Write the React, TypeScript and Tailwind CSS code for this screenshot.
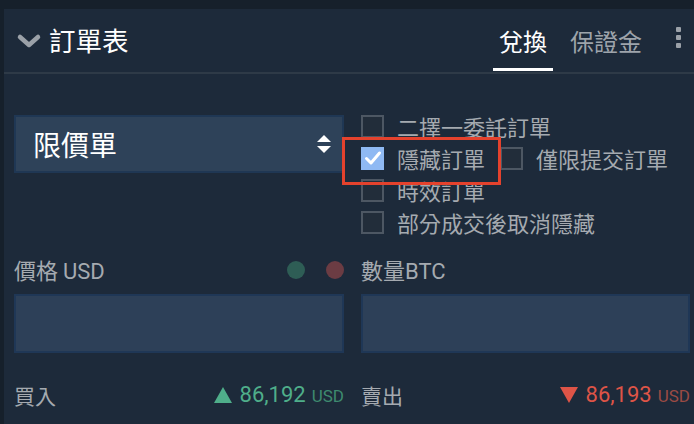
import React from "react";

const cjk = { fontFamily: '"Noto Sans CJK TC", "Noto Sans", sans-serif' };
const num = { fontFamily: 'Roboto, "Noto Sans CJK TC", sans-serif' };

function Box({ checked }: { checked?: boolean }) {
  if (checked) {
    return (
      <div className="w-[23px] h-[23px] bg-[#8fb9f3] flex items-center justify-center shrink-0">
        <svg width="18" height="16" viewBox="0 0 18 16">
          <path d="M2.5 8.5 L7 13 L15.5 3" fill="none" stroke="#ffffff" strokeWidth="3" strokeLinecap="round" strokeLinejoin="round" />
        </svg>
      </div>
    );
  }
  return <div className="w-[23px] h-[23px] border-2 border-[#4d5763] bg-[#222d3a] shrink-0" />;
}

export default function App() {
  return (
    <div className="w-[694px] h-[424px] bg-[#16202b] overflow-hidden pt-[9px] pl-[4px]" style={cjk}>
      <div className="relative h-full bg-[#1d2a3a]">
        {/* header */}
        <div className="h-[65px] flex items-center border-b-2 border-[#2e3a47] relative">
          <svg className="ml-[12px]" width="26" height="18" viewBox="0 0 26 18">
            <path d="M4 5 L13 13 L22 5" fill="none" stroke="#9ba1a8" strokeWidth="4.5" strokeLinecap="round" strokeLinejoin="round" />
          </svg>
          <span className="ml-[7px] text-[26.5px] text-white leading-none">訂單表</span>
          <div className="ml-auto flex items-center h-full">
            <div className="relative h-full flex items-center px-[6px]">
              <span className="text-[24px] text-white leading-none">兌換</span>
              <div className="absolute left-0 right-0 bottom-[1px] h-[3px] bg-white" />
            </div>
            <span className="ml-[17px] text-[24px] text-[#9ea4ab] leading-none">保證金</span>
            <div className="ml-[34px] mr-[13px] flex flex-col gap-[3px] self-start mt-[18px]">
              <div className="w-[5px] h-[5px] rounded-[1px] bg-[#9ba1a8]" />
              <div className="w-[5px] h-[5px] rounded-[1px] bg-[#9ba1a8]" />
              <div className="w-[5px] h-[5px] rounded-[1px] bg-[#9ba1a8]" />
            </div>
          </div>
        </div>

        {/* body */}
        <div className="pl-[10px] pt-[36px]">
          <div className="flex gap-[17px]">
            <div className="w-[330px] pt-[5px]">
              <div className="h-[58px] bg-[#2e4259] border-2 border-[#1f3754] flex items-center pl-[17px] pr-[10px]">
                <span className="text-[28px] text-white leading-none">限價單</span>
                <svg className="ml-auto" width="16" height="20" viewBox="0 0 16 20">
                  <path d="M8 1 L15 8 L1 8 Z" fill="#ffffff" />
                  <path d="M1 12 L15 12 L8 19 Z" fill="#ffffff" />
                </svg>
              </div>
            </div>
            <div className="flex-1 flex flex-col">
              <div className="h-[32px] flex items-center">
                <Box />
                <span className="ml-[13px] text-[22px] text-[#a5aab0] leading-none">二擇一委託訂單</span>
              </div>
              <div className="h-[32px] flex items-center">
                <Box checked />
                <span className="ml-[13px] text-[22px] text-[#a5aab0] leading-none">隱藏訂單</span>
                <div className="ml-[15px]"><Box /></div>
                <span className="ml-[13px] text-[22px] text-[#a5aab0] leading-none">僅限提交訂單</span>
              </div>
              <div className="h-[32px] flex items-center">
                <Box />
                <span className="ml-[13px] text-[22px] text-[#a5aab0] leading-none">時效訂單</span>
              </div>
              <div className="h-[32px] flex items-center">
                <Box />
                <span className="ml-[13px] text-[22px] text-[#a5aab0] leading-none">部分成交後取消隱藏</span>
              </div>
            </div>
          </div>

          <div className="flex gap-[17px] mt-[18px]">
            <div className="w-[330px]">
              <div className="h-[28px] flex items-center">
                <span className="text-[22px] text-[#a5aab0] leading-none">價格 <span style={num}>USD</span></span>
                <div className="ml-auto w-[18px] h-[18px] rounded-full bg-[#2e5d55]" />
                <div className="ml-[21px] w-[18px] h-[18px] rounded-full bg-[#6b3c43]" />
              </div>
              <div className="mt-[10px] h-[59px] bg-[#2d4058] border-2 border-[#1f3756]" />
              <div className="mt-[27px] h-[30px] flex items-center">
                <span className="text-[21px] text-[#a5aab0] leading-none">買入</span>
                <div className="ml-auto flex items-baseline" style={num}>
                  <svg className="self-center mr-[8px]" width="18" height="16" viewBox="0 0 18 16">
                    <path d="M9 0 L18 16 L0 16 Z" fill="#4fae8a" />
                  </svg>
                  <span className="text-[22px] text-[#4fae8a] leading-none">86,192</span>
                  <span className="ml-[6px] text-[17px] text-[#3e8a6f] leading-none">USD</span>
                </div>
              </div>
            </div>
            <div className="w-[329px]">
              <div className="h-[28px] flex items-center">
                <span className="text-[22px] text-[#a5aab0] leading-none">數量<span style={num}>BTC</span></span>
              </div>
              <div className="mt-[10px] h-[59px] bg-[#2d4058] border-2 border-[#1f3756]" />
              <div className="mt-[27px] h-[30px] flex items-center">
                <span className="text-[21px] text-[#a5aab0] leading-none">賣出</span>
                <div className="ml-auto flex items-baseline" style={num}>
                  <svg className="self-center mr-[8px]" width="18" height="16" viewBox="0 0 18 16">
                    <path d="M0 0 L18 0 L9 16 Z" fill="#de5447" />
                  </svg>
                  <span className="text-[22px] text-[#de5447] leading-none">86,193</span>
                  <span className="ml-[6px] text-[17px] text-[#9a4a44] leading-none">USD</span>
                </div>
              </div>
            </div>
          </div>
        </div>

        {/* red highlight overlay */}
        <div className="absolute left-[338px] top-[128px] w-[159px] h-[48px] border-[3px] border-[#e4422d] pointer-events-none" />
      </div>
    </div>
  );
}
